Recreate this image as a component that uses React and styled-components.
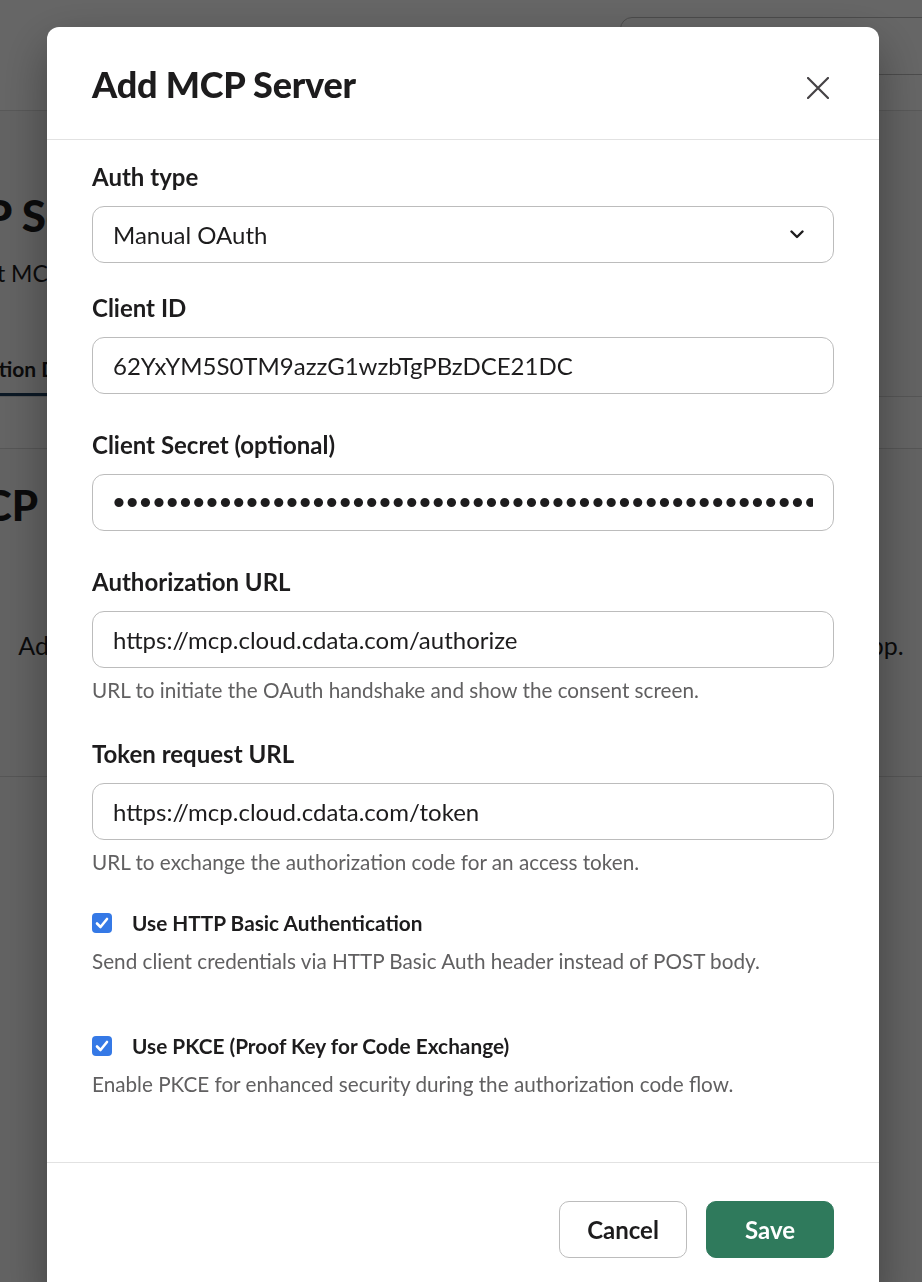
import React from 'react';
import styled, { createGlobalStyle } from 'styled-components';

const GlobalStyle = createGlobalStyle`
  html, body {
    margin: 0;
    height: 100%;
    overflow: hidden;
  }

  body {
    font-family: Lato, 'Noto Sans', 'Liberation Sans', sans-serif;
    color: #1d1c1d;
    background-color: #f6f6f6;
  }

  * {
    box-sizing: border-box;
  }
`;

/* page behind the dialog */

const Page = styled.div`
  height: 1282px;
  overflow: hidden;
  background-color: #f6f6f6;
`;

const TopBar = styled.header`
  height: 111px;
  display: flex;
  justify-content: flex-end;
  padding-top: 17px;
  background-color: #fff;
  border-bottom: 1px solid #dddddd;
`;

const SearchBox = styled.div`
  width: 340px;
  height: 58px;
  margin-right: -38px;
  border: 1px solid #bdbdbd;
  border-radius: 12px;
  background-color: #fff;
`;

const PageHeader = styled.div`
  margin-left: -80px;
  padding-top: 78px;
  display: flex;
  flex-direction: column;
  gap: 17px;
`;

const PageTitle = styled.h1`
  margin: 0 0 0 -6px;
  font-size: 44px;
  line-height: 52px;
  font-weight: 900;
`;

const PageSubtitle = styled.p`
  margin: 0;
  font-size: 23px;
  line-height: 30px;
`;

const Tabs = styled.nav`
  margin-top: 68px;
  display: flex;
  gap: 32px;
  border-bottom: 1px solid #d6d6d6;
`;

const Tab = styled.div`
  margin-left: ${({ offset }) => offset || 0}px;
  padding-bottom: 11px;
  font-size: 21px;
  line-height: 26px;
  font-weight: 700;
  border-bottom: 3px solid ${({ active }) => (active ? '#1d3d5c' : 'transparent')};
`;

const Toolbar = styled.div`
  height: 52px;
  background-color: #fafafa;
  border-bottom: 1px solid #d6d6d6;
`;

const EmptyState = styled.section`
  padding: 31px 0 116px;
  display: flex;
  flex-direction: column;
  gap: 100px;
  border-bottom: 1px solid #d6d6d6;
`;

const EmptyTitle = styled.h2`
  margin: 0 0 0 -56px;
  font-size: 42px;
  line-height: 50px;
  font-weight: 900;
`;

const EmptyText = styled.p`
  margin: 0;
  font-size: 25px;
  line-height: 30px;
  text-align: center;
  white-space: nowrap;
`;

/* dialog */

const Overlay = styled.div`
  position: fixed;
  inset: 0;
  padding: 27px 0 0 47px;
  background-color: rgba(0, 0, 0, 0.6);
  overflow: hidden;
`;

const Modal = styled.div`
  width: 832px;
  border-radius: 12px;
  background-color: #fff;
  box-shadow: 0 18px 48px rgba(0, 0, 0, 0.35);
`;

const ModalHeader = styled.div`
  height: 113px;
  display: flex;
  align-items: center;
  justify-content: space-between;
  padding: 0 48px 0 45px;
  border-bottom: 1px solid #e2e2e2;
`;

const ModalTitle = styled.h2`
  margin: 2px 0 0;
  font-size: 36px;
  line-height: 42px;
  font-weight: 900;
  letter-spacing: -0.2px;
`;

const CloseButton = styled.button`
  width: 26px;
  height: 26px;
  margin-top: 9px;
  padding: 0;
  border: none;
  background: none;
  display: flex;
  align-items: center;
  justify-content: center;
  color: #454245;
`;

const ModalBody = styled.div`
  padding: 22px 45px 65px;
  display: flex;
  flex-direction: column;
  gap: 36px;
`;

const Field = styled.div`
  display: flex;
  flex-direction: column;

  &:first-child {
    margin-bottom: -6px;
  }
`;

const Label = styled.label`
  margin-bottom: 15px;
  font-size: 24px;
  line-height: 29px;
  font-weight: 700;
`;

const Control = styled.div`
  height: 57px;
  display: flex;
  align-items: center;
  justify-content: space-between;
  padding: 0 29px 0 20px;
  border: 1px solid #bcbcbc;
  border-radius: 12px;
  font-size: 24px;
  color: #1d1c1d;
`;

const TextInput = styled.input`
  height: 57px;
  width: 100%;
  padding: 0 20px;
  border: 1px solid #bcbcbc;
  border-radius: 12px;
  outline: none;
  font-family: ${({ secret }) => (secret ? "'Liberation Sans', Arial, sans-serif" : "Lato, 'Noto Sans', sans-serif")};
  font-size: ${({ secret }) => (secret ? '34px' : '24px')};
  letter-spacing: ${({ secret }) => (secret ? '1.4px' : 'normal')};
  color: #1d1c1d;
  background-color: #fff;
`;

const Hint = styled.p`
  margin: ${({ flush }) => (flush ? '0' : '9px 0 0')};
  font-size: 20.7px;
  line-height: 26px;
  color: #616061;
`;

const CheckGroup = styled.div`
  display: flex;
  flex-direction: column;
  gap: 13px;

  & + & {
    margin-top: 24px;
  }
`;

const CheckRow = styled.label`
  display: flex;
  align-items: center;
  gap: 20px;
  font-size: 20.8px;
  line-height: 24px;
  font-weight: 700;
`;

const CheckBox = styled.span`
  width: 20px;
  height: 20px;
  border-radius: 4px;
  background-color: #3579e6;
  display: flex;
  align-items: center;
  justify-content: center;
  flex-shrink: 0;
`;

const ModalFooter = styled.div`
  padding: 38px 45px 40px;
  display: flex;
  justify-content: flex-end;
  gap: 19px;
  border-top: 1px solid #e2e2e2;
`;

const Button = styled.button`
  width: 128px;
  height: 57px;
  border-radius: 10px;
  font-family: Lato, 'Noto Sans', sans-serif;
  font-size: 24px;
  font-weight: 700;
  border: 1px solid ${({ primary }) => (primary ? '#2f7a5c' : '#bcbcbc')};
  background-color: ${({ primary }) => (primary ? '#2f7a5c' : '#fff')};
  color: ${({ primary }) => (primary ? '#fff' : '#1d1c1d')};
`;

const CloseIcon = () => (
  <svg width="22" height="22" viewBox="0 0 22 22" fill="none">
    <path d="M1 1L21 21M21 1L1 21" stroke="currentColor" strokeWidth="2.2" strokeLinecap="round" />
  </svg>
);

const ChevronIcon = () => (
  <svg width="14" height="9" viewBox="0 0 14 9" fill="none">
    <path d="M1.5 1.5L7 7L12.5 1.5" stroke="#1d1c1d" strokeWidth="2.4" strokeLinecap="round" strokeLinejoin="round" />
  </svg>
);

const CheckIcon = () => (
  <svg width="14" height="12" viewBox="0 0 14 12" fill="none">
    <path d="M2 6.5L5.5 10L12 2" stroke="#fff" strokeWidth="2.6" strokeLinecap="round" strokeLinejoin="round" />
  </svg>
);

const fields = [
  {
    label: 'Client ID',
    value: '62YxYM5S0TM9azzG1wzbTgPBzDCE21DC',
  },
  {
    label: 'Client Secret (optional)',
    value: 'x'.repeat(64),
    secret: true,
  },
  {
    label: 'Authorization URL',
    value: 'https://mcp.cloud.cdata.com/authorize',
    hint: 'URL to initiate the OAuth handshake and show the consent screen.',
  },
  {
    label: 'Token request URL',
    value: 'https://mcp.cloud.cdata.com/token',
    hint: 'URL to exchange the authorization code for an access token.',
  },
];

const options = [
  {
    label: 'Use HTTP Basic Authentication',
    description: 'Send client credentials via HTTP Basic Auth header instead of POST body.',
  },
  {
    label: 'Use PKCE (Proof Key for Code Exchange)',
    description: 'Enable PKCE for enhanced security during the authorization code flow.',
  },
];

const App = () => {
  return (
    <>
      <GlobalStyle />
      <Page>
        <TopBar>
          <SearchBox />
        </TopBar>
        <PageHeader>
          <PageTitle>MCP Servers</PageTitle>
          <PageSubtitle>Connect MCP servers to your app</PageSubtitle>
        </PageHeader>
        <Tabs>
          <Tab active offset={-72}>Connection Details</Tab>
          <Tab>Tools</Tab>
        </Tabs>
        <Toolbar />
        <EmptyState>
          <EmptyTitle>MCP servers</EmptyTitle>
          <EmptyText>
            Add an MCP server to give your agent access to tools and data from another app.
          </EmptyText>
        </EmptyState>
      </Page>

      <Overlay>
        <Modal>
          <ModalHeader>
            <ModalTitle>Add MCP Server</ModalTitle>
            <CloseButton aria-label="Close">
              <CloseIcon />
            </CloseButton>
          </ModalHeader>

          <ModalBody>
            <Field>
              <Label>Auth type</Label>
              <Control>
                Manual OAuth
                <ChevronIcon />
              </Control>
            </Field>

            {fields.map((field) => (
              <Field key={field.label}>
                <Label>{field.label}</Label>
                <TextInput
                  readOnly
                  secret={field.secret}
                  type={field.secret ? 'password' : 'text'}
                  value={field.value}
                />
                {field.hint && <Hint>{field.hint}</Hint>}
              </Field>
            ))}

            {options.map((option) => (
              <CheckGroup key={option.label}>
                <CheckRow>
                  <CheckBox>
                    <CheckIcon />
                  </CheckBox>
                  {option.label}
                </CheckRow>
                <Hint flush>{option.description}</Hint>
              </CheckGroup>
            ))}
          </ModalBody>

          <ModalFooter>
            <Button>Cancel</Button>
            <Button primary>Save</Button>
          </ModalFooter>
        </Modal>
      </Overlay>
    </>
  );
};

export default App;
